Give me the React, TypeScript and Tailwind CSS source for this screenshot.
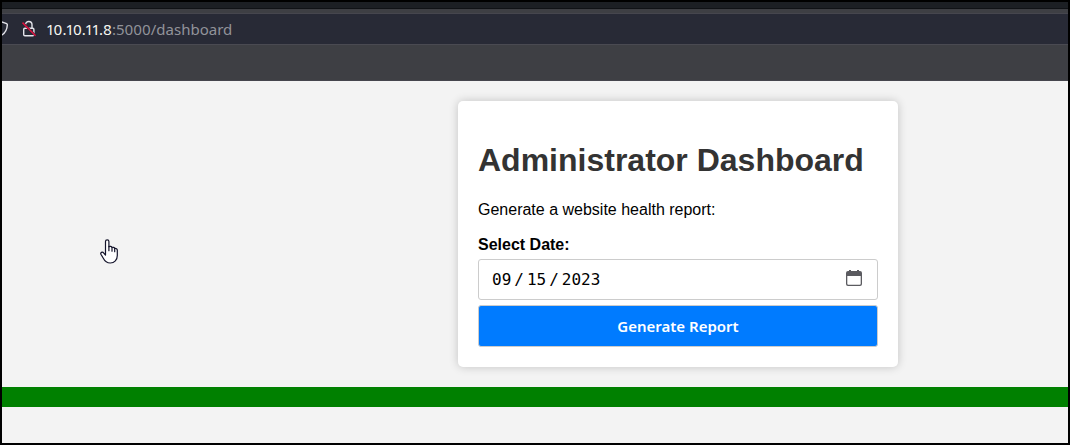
import { useState } from "react";

function ShieldIcon() {
  return (
    <svg width="8" height="18" viewBox="0 0 8 18" fill="none" stroke="#e4e4ea" strokeWidth="1.4" aria-hidden="true">
      <path d="M-1 1.6 L4.6 3.6 Q5.4 4 5.3 5 C5.1 10 3.4 13.2 -1 15.6" />
    </svg>
  );
}

function InsecureLockIcon() {
  return (
    <svg width="16" height="18" viewBox="0 0 16 18" fill="none" aria-hidden="true">
      <path d="M4.6 4.6 C4.6 0.4 11 0.4 11 4.8 V8" stroke="#e4e4ea" strokeWidth="1.4" />
      <rect x="2.7" y="8.2" width="10.2" height="7.6" rx="1.2" stroke="#e4e4ea" strokeWidth="1.4" />
      <path d="M1.5 2.6 L14.6 15.8" stroke="#282a36" strokeWidth="2.2" />
      <path d="M1.5 2.6 L14.6 15.8" stroke="#e0123f" strokeWidth="1.5" />
    </svg>
  );
}

function CalendarIcon() {
  return (
    <svg width="16" height="16" viewBox="0 0 16 16" fill="#5b5b60" aria-hidden="true">
      <path
        fillRule="evenodd"
        d="M3 0h2v1h6V0h2v1h1a2 2 0 0 1 2 2v11a2 2 0 0 1-2 2H2a2 2 0 0 1-2-2V3a2 2 0 0 1 2-2h1zM1.3 6v7.7a1 1 0 0 0 1 1h11.4a1 1 0 0 0 1-1V6z"
      />
    </svg>
  );
}

function HandPointer() {
  return (
    <svg width="18" height="25" viewBox="0 0 18 25" aria-hidden="true">
      <path
        d="M5.5 14.2V2.5a1.7 1.7 0 0 1 3.4 0v5.2c1-.8 2.7-.4 3.1.8 1-.6 2.400-.1 2.700 1 1.300-.5 2.600.3 2.600 1.700v5.300c0 4.400-2.900 7.500-7 7.500-3.700 0-5.600-2-7-4.800L.9 15.200c-.5-1 .2-2 1.300-2 .8 0 1.300.5 1.800 1.100l1.500 1.800z"
        fill="#fff"
        stroke="#14142b"
        strokeWidth="1.2"
        strokeLinejoin="round"
      />
      <path d="M8.900 7.500v4.200M12 8.500v3.700M14.700 9.500v3.200" stroke="#14142b" strokeWidth="1.2" strokeLinecap="round" />
    </svg>
  );
}

function BrowserBar() {
  return (
    <header>
      <div className="h-[7px] border-b border-[#101216] bg-[#1c1f24]" />
      <div className="h-[5px] border-b border-[#46464e] bg-[#3e3f44]" />
      <div className="flex h-[31px] items-center border-b border-[#4a4a52] bg-[#282a36] font-['Noto_Sans',sans-serif] text-[15px]">
        <ShieldIcon />
        <span className="ml-[11px]">
          <InsecureLockIcon />
        </span>
        <span className="ml-[10px] text-[#92939a] proportional-nums">
          <span className="text-[#f8f8f2]">10.10.11.8</span>:5000/dashboard
        </span>
      </div>
      <div className="h-9 border-b border-[#45454d] bg-[#3e3f44]" />
    </header>
  );
}

function ReportCard() {
  const [date, setDate] = useState("2023-09-15");
  return (
    <form
      onSubmit={(e) => e.preventDefault()}
      className="w-full max-w-[440px] rounded-[5px] bg-white p-5 shadow-[0_0_10px_rgba(0,0,0,0.2)]"
    >
      <h1 className="mt-5 text-[32px] leading-[38px] font-bold whitespace-nowrap text-[#333]">
        Administrator Dashboard
      </h1>
      <p className="mt-[22px] leading-[18px]">Generate a website health report:</p>
      <label htmlFor="date" className="mt-[17px] block leading-[18px] font-bold">
        Select Date:
      </label>
      <div className="relative mt-[5px]">
        <input
          id="date"
          type="date"
          value={date}
          onChange={(e) => setDate(e.target.value)}
          className="block h-[41px] w-full rounded-[3px] border border-[#ccc] bg-white px-3 font-['DejaVu_Sans_Mono',monospace] text-base text-black [&::-webkit-calendar-picker-indicator]:opacity-0 [&::-webkit-datetime-edit-text]:px-[2px]"
        />
        <span className="pointer-events-none absolute top-[11px] right-4">
          <CalendarIcon />
        </span>
      </div>
      <button
        type="submit"
        className="mt-[5px] block h-[42px] w-full rounded-[3px] border border-[#ccc] bg-[#007bff] font-['Noto_Sans',sans-serif] text-[15px] font-semibold text-white"
      >
        Generate Report
      </button>
    </form>
  );
}

export default function App() {
  return (
    <div className="flex min-h-screen flex-col border-2 border-black bg-[#f3f3f3] font-['Liberation_Sans',Arial,sans-serif] text-base text-black">
      <BrowserBar />
      <main className="flex justify-center py-5 pl-[286px]">
        <ReportCard />
      </main>
      <div className="h-5 bg-[#008000]" />
      <div className="pointer-events-none absolute top-[239px] left-[100px]">
        <HandPointer />
      </div>
    </div>
  );
}
